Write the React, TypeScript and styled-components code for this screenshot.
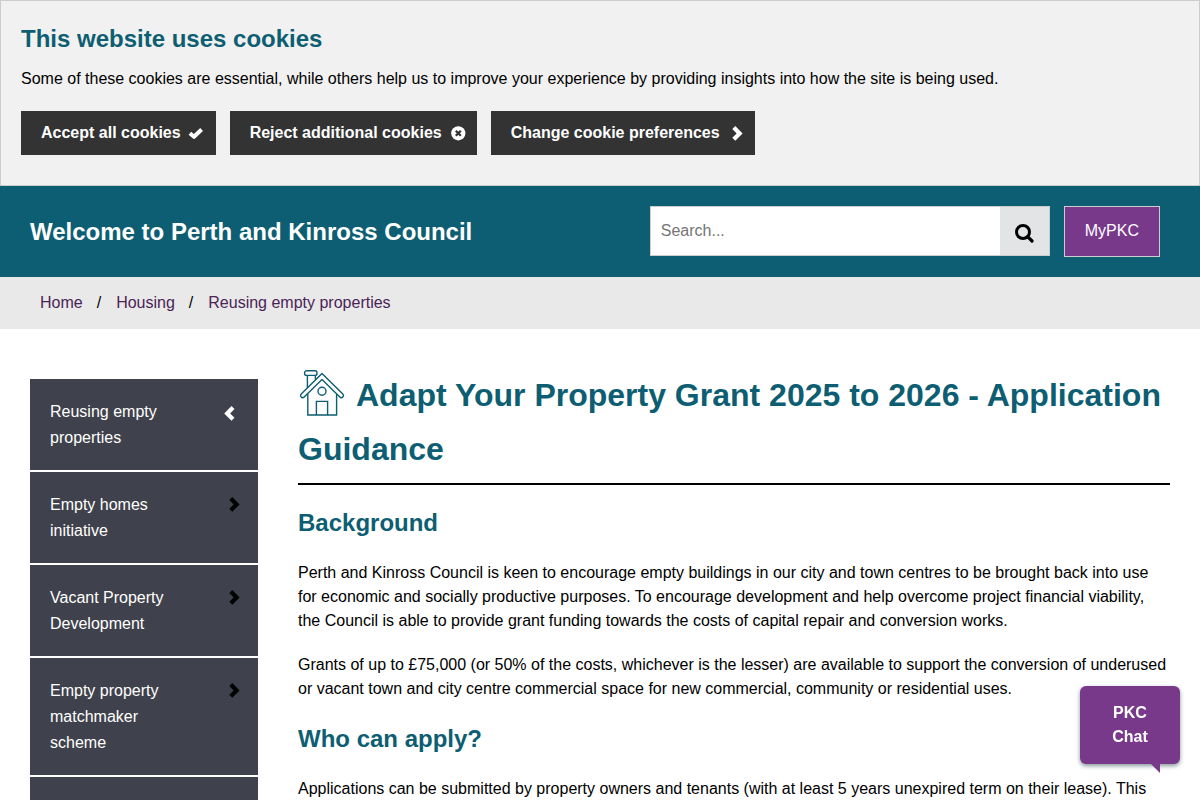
import React from "react";
import styled, { createGlobalStyle } from "styled-components";

const teal = "#0d5e72";
const purple = "#78398b";

const GlobalStyle = createGlobalStyle`
  *, *::before, *::after { box-sizing: border-box; }
  body {
    margin: 0;
    background: #fff;
    color: #000;
    font-family: "Liberation Sans", Arial, sans-serif;
    font-size: 16px;
    line-height: 24px;
  }
  h1, h2, p, ul, ol { margin: 0; padding: 0; }
  ul, ol { list-style: none; }
  button, input { font: inherit; }
`;

const CookieBanner = styled.section`
  padding: 20px 20px 30px;
  background: #f1f1f1;
  border: 1px solid #ccc;
`;

const Heading = styled.h2`
  color: ${teal};
  font-size: 24px;
  line-height: 36px;
`;

const CookieText = styled.p`
  margin: 10px 0 20px;
`;

const CookieActions = styled.div`
  display: flex;
  flex-wrap: wrap;
  gap: 14px;
`;

const CookieButton = styled.button`
  display: flex;
  align-items: center;
  gap: 5px;
  padding: 10px 10px 10px 20px;
  border: 0;
  background: #333;
  color: #fff;
  font-weight: bold;
  line-height: 24px;
  cursor: pointer;
`;

const Icon = styled.svg`
  display: block;
  flex: none;
  width: 20px;
  height: 20px;
`;

const Header = styled.header`
  display: flex;
  align-items: flex-start;
  padding: 20px 40px 20px 30px;
  background: ${teal};
`;

const SiteTitle = styled.span`
  flex: 1;
  color: #fff;
  font-size: 24px;
  font-weight: bold;
  line-height: 51px;
`;

const SearchForm = styled.form`
  display: flex;
  flex: 0 1 400px;
  height: 50px;
  margin-right: 14px;
  border: 1px solid #ccc;
`;

const SearchInput = styled.input`
  flex: 1;
  min-width: 0;
  padding: 0 10px;
  border: 0;
  border-radius: 0;
  background: #fff;
  &::placeholder { color: #757575; }
`;

const SearchButton = styled.button`
  display: flex;
  align-items: center;
  justify-content: center;
  width: 49px;
  padding: 4px 0 0;
  border: 0;
  background: #e3e4e6;
  cursor: pointer;
`;

const AccountLink = styled.a`
  padding: 12px 20px 13px;
  border: 1px solid #ccc;
  background: ${purple};
  color: #fff;
  text-decoration: none;
`;

const Breadcrumbs = styled.nav`
  padding: 14px 40px;
  background: #e9e9e9;
`;

const Trail = styled.ol`
  display: flex;
`;

const Crumb = styled.li`
  & + &::before {
    content: "/";
    padding: 0 15px 0 14px;
  }
`;

const CrumbLink = styled.a`
  color: #4b2457;
  text-decoration: none;
`;

const Columns = styled.div`
  display: grid;
  grid-template-columns: 228px minmax(0, 1fr);
  gap: 40px;
  padding: 39px 30px 0;
`;

const SideList = styled.ul`
  display: flex;
  flex-direction: column;
  gap: 2px;
  padding-top: 11px;
`;

const SideItem = styled.li`
  min-height: 91px;
  background: #3f424c;
`;

const SideLink = styled.a<{ $parent?: boolean }>`
  display: flex;
  align-items: flex-start;
  justify-content: space-between;
  gap: 40px;
  padding: 20px ${(p) => (p.$parent ? 20 : 16)}px 19px 20px;
  color: ${(p) => (p.$parent ? "#fff" : "#000")};
  line-height: 26px;
  text-decoration: none;
  svg { margin-top: ${(p) => (p.$parent ? 4 : 2)}px; }
`;

const SideLabel = styled.span`
  color: #fff;
`;

const Title = styled.h1`
  padding-bottom: 7px;
  margin-bottom: 20px;
  border-bottom: 2px solid #000;
  color: ${teal};
  font-size: 32px;
  line-height: 54px;
`;

const House = styled.svg`
  width: 48px;
  height: 48px;
  margin-right: 10px;
  vertical-align: -12px;
`;

const Article = styled.main`
  p { margin: 20px 0; }
`;

const ChatButton = styled.button`
  position: fixed;
  right: 20px;
  bottom: 36px;
  width: 100px;
  padding: 15px 20px;
  border: 0;
  border-radius: 6px;
  background: ${purple};
  box-shadow: 0 2px 4px rgba(13, 50, 60, 0.5);
  color: #fff;
  font-weight: bold;
  line-height: 24px;
  cursor: pointer;
  &::after {
    content: "";
    position: absolute;
    top: 100%;
    right: 20px;
    margin-top: -1px;
    border-top: 10px solid ${purple};
    border-left: 10px solid transparent;
  }
`;

const CheckIcon = () => (
  <Icon viewBox="0 0 20 20" aria-hidden="true">
    <path d="M3.9 10.2l4.1 3.6L15.6 6.5" fill="none" stroke="currentColor" strokeWidth="4" strokeLinejoin="round" />
  </Icon>
);

const RejectIcon = () => (
  <Icon viewBox="0 0 20 20" aria-hidden="true">
    <circle cx="11.3" cy="10.3" r="7.1" fill="currentColor" />
    <path d="M8.8 7.8l5 5M13.8 7.8l-5 5" stroke="#333" strokeWidth="2.3" />
  </Icon>
);

const ChevronIcon = ({ left = false }: { left?: boolean }) => (
  <Icon viewBox="0 0 20 20" aria-hidden="true">
    <path
      d={left ? "M15 4.6L9.2 10.4l5.8 5.8" : "M8.8 4.6l5.8 5.8-5.8 5.8"}
      fill="none"
      stroke="currentColor"
      strokeWidth="4.2"
    />
  </Icon>
);

const SearchIcon = () => (
  <Icon viewBox="0 0 20 20" aria-hidden="true">
    <circle cx="9" cy="9" r="6.5" fill="none" stroke="#000" strokeWidth="3" />
    <path d="M13.6 13.6l4.4 4.4" stroke="#000" strokeWidth="3.2" strokeLinecap="round" />
  </Icon>
);

const HouseIcon = () => (
  <House viewBox="0 0 48 48" fill="none" stroke={teal} strokeWidth="1.4" aria-hidden="true">
    <rect x="6.6" y="0.8" width="12.4" height="4.6" rx="2" />
    <path d="M9.4 5.4v12.4M17.4 5.4v4" />
    <path
      d="M24 3.4L3.2 24a2 2 0 0 0 0 3 2 2 0 0 0 3 0L24 9.4 41.8 27a2 2 0 0 0 3 0 2 2 0 0 0 0-3z"
      strokeLinejoin="round"
    />
    <path d="M9.8 24v21h28.8V24" />
    <path d="M18.4 45V31.4h11.2V45" />
    <circle cx="24" cy="21.2" r="4" />
  </House>
);

const sideLinks = ["Empty homes initiative", "Vacant Property Development", "Empty property matchmaker scheme"];
const crumbs = ["Home", "Housing", "Reusing empty properties"];

export default function App() {
  return (
    <>
      <GlobalStyle />
      <CookieBanner>
        <Heading>This website uses cookies</Heading>
        <CookieText>
          Some of these cookies are essential, while others help us to improve your experience by providing insights
          into how the site is being used.
        </CookieText>
        <CookieActions>
          <CookieButton type="button">Accept all cookies <CheckIcon /></CookieButton>
          <CookieButton type="button">Reject additional cookies <RejectIcon /></CookieButton>
          <CookieButton type="button">Change cookie preferences <ChevronIcon /></CookieButton>
        </CookieActions>
      </CookieBanner>
      <Header>
        <SiteTitle>Welcome to Perth and Kinross Council</SiteTitle>
        <SearchForm role="search" onSubmit={(e) => e.preventDefault()}>
          <SearchInput type="text" placeholder="Search..." aria-label="Search" />
          <SearchButton type="submit" aria-label="Search"><SearchIcon /></SearchButton>
        </SearchForm>
        <AccountLink href="#">MyPKC</AccountLink>
      </Header>
      <Breadcrumbs aria-label="Breadcrumb">
        <Trail>
          {crumbs.map((c) => (
            <Crumb key={c}><CrumbLink href="#">{c}</CrumbLink></Crumb>
          ))}
        </Trail>
      </Breadcrumbs>
      <Columns>
        <nav aria-label="Section">
          <SideList>
            <SideItem>
              <SideLink href="#" $parent>
                <SideLabel>Reusing empty properties</SideLabel>
                <ChevronIcon left />
              </SideLink>
            </SideItem>
            {sideLinks.map((label) => (
              <SideItem key={label}>
                <SideLink href="#">
                  <SideLabel>{label}</SideLabel>
                  <ChevronIcon />
                </SideLink>
              </SideItem>
            ))}
            <SideItem />
          </SideList>
        </nav>
        <Article>
          <Title><HouseIcon />Adapt Your Property Grant 2025 to 2026 - Application Guidance</Title>
          <Heading>Background</Heading>
          <p>
            Perth and Kinross Council is keen to encourage empty buildings in our city and town centres to be brought
            back into use for economic and socially productive purposes. To encourage development and help overcome
            project financial viability, the Council is able to provide grant funding towards the costs of capital
            repair and conversion works.
          </p>
          <p>
            Grants of up to £75,000 (or 50% of the costs, whichever is the lesser) are available to support the
            conversion of underused or vacant town and city centre commercial space for new commercial, community or
            residential uses.
          </p>
          <Heading>Who can apply?</Heading>
          <p>
            Applications can be submitted by property owners and tenants (with at least 5 years unexpired term on
            their lease). This
          </p>
        </Article>
      </Columns>
      <ChatButton type="button">PKC Chat</ChatButton>
    </>
  );
}
